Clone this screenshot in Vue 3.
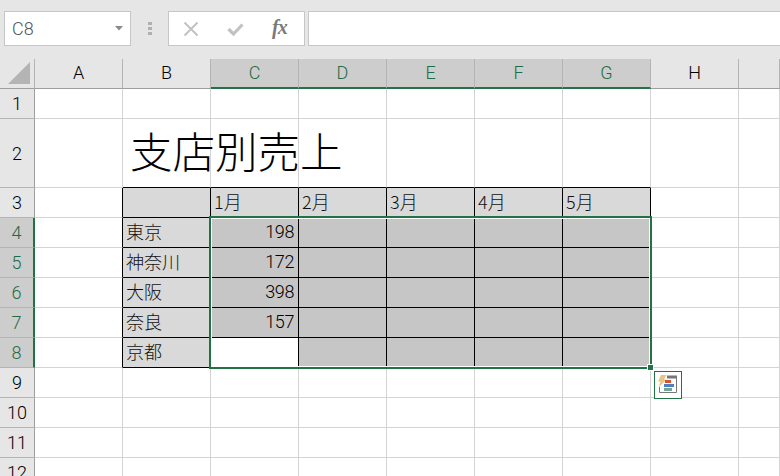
<script setup>
const colNames = ['A', 'B', 'C', 'D', 'E', 'F', 'G', 'H', '']
const rowNums = [1, 2, 3, 4, 5, 6, 7, 8, 9, 10, 11, 12]
const data = {
  B2: '支店別売上',
  C3: '1月', D3: '2月', E3: '3月', F3: '4月', G3: '5月',
  B4: '東京', B5: '神奈川', B6: '大阪', B7: '奈良', B8: '京都',
  C4: '198', C5: '172', C6: '398', C7: '157'
}
const inTable = (c, r) => c >= 1 && c <= 6 && r >= 3 && r <= 8
const cells = []
rowNums.forEach((r) => {
  colNames.forEach((name, c) => {
    const key = name + r
    const cls = []
    const isSel = c >= 2 && c <= 6 && r >= 4 && r <= 8
    if (inTable(c, r)) cls.push(isSel ? (key === 'C8' ? 'active' : 'sel') : 'tbl')
    if (inTable(c, r) || inTable(c + 1, r)) cls.push('br')
    if (inTable(c, r) || inTable(c, r + 1)) cls.push('bb')
    if (r === 2 && c === 1) cls.push('title')
    if (c === 2 && r >= 4) cls.push('num')
    cells.push({ key, text: data[key] || '', cls })
  })
})
</script>

<template>
  <div class="app">
    <div class="fbar">
      <div class="namebox">
        <span class="nametext">C8</span>
        <svg class="caret" width="8" height="5" viewBox="0 0 8 5"><path d="M0 0h8L4 4.500z" fill="#8a8a8a" /></svg>
      </div>
      <div class="grip"><i></i><i></i><i></i></div>
      <div class="btns">
        <svg width="16" height="16" viewBox="0 0 16 16"><path d="M1.500 1.500l13 13M14.500 1.500l-13 13" stroke="#c2c2c2" stroke-width="2" fill="none" /></svg>
        <svg width="18" height="16" viewBox="0 0 18 16"><path d="M1.500 8l5 5 9-9.500" stroke="#c2c2c2" stroke-width="3.200" fill="none" /></svg>
        <span class="fx">fx</span>
      </div>
      <div class="finput"></div>
    </div>

    <div class="sheet">
      <div class="corner"><svg width="23" height="23" viewBox="0 0 23 23"><path d="M22 0v22H0z" fill="#b4b4b4" /></svg></div>
      <div v-for="(n, i) in colNames" :key="'c' + i" class="chead" :class="{ on: i >= 2 && i <= 6 }">{{ n }}</div>
      <template v-for="(r, ri) in rowNums" :key="'r' + r">
        <div class="rhead" :class="{ on: r >= 4 && r <= 8 }">{{ r }}</div>
        <div v-for="cell in cells.slice(ri * 9, ri * 9 + 9)" :key="cell.key" class="cell" :class="cell.cls">{{ cell.text }}</div>
      </template>

      <div class="selection"><span class="handle"></span></div>
      <div class="qa">
        <svg width="26" height="26" viewBox="0 0 26 26">
          <path d="M4.500 15v5.500H21.500V4" fill="none" stroke="#777" stroke-width="1" />
          <path d="M12 3.500h10v3H12z" fill="#777" />
          <path d="M6 3h5.500L9 7.500h2.500L3.500 15.500l2-6H3z" fill="#e9c583" />
          <path d="M10 8h6v3h-6z" fill="#d9532c" />
          <path d="M9 12h10v3H9z" fill="#4e81bd" />
          <path d="M9 16h8v3H9z" fill="#6fa898" />
        </svg>
      </div>
    </div>
  </div>
</template>

<style scoped>
.app {
  width: 780px;
  height: 476px;
  overflow: hidden;
  background: #fff;
  font-family: "Noto Sans CJK JP", "Noto Sans", sans-serif;
  font-weight: 300;
  color: #000;
}
.fbar {
  height: 59px;
  box-sizing: border-box;
  padding: 11px 0 13px 4px;
  background: #e6e6e6;
  display: flex;
}
.namebox {
  width: 127px;
  box-sizing: border-box;
  background: #fff;
  border: 1px solid #c6c6c6;
  display: flex;
  align-items: center;
  justify-content: space-between;
  padding: 0 7px 0 7px;
}
.nametext {
  font-size: 18px;
  color: #555;
  font-family: Roboto, sans-serif;
  font-weight: 300;
}
.grip {
  width: 37px;
  display: flex;
  flex-direction: column;
  align-items: center;
  justify-content: center;
  gap: 2px;
  margin-top: -1px;
}
.grip i {
  width: 4px;
  height: 3px;
  background: #b0b0b0;
}
.btns {
  width: 137px;
  box-sizing: border-box;
  background: #fff;
  border: 1px solid #c6c6c6;
  display: flex;
  align-items: center;
  padding: 0 0 0 14px;
  gap: 28px;
}
.fx {
  font-family: "Liberation Serif", serif;
  font-style: italic;
  font-weight: 700;
  font-size: 20px;
  color: #7a7a7a;
  letter-spacing: -1px;
  margin-top: -3px;
  margin-left: -1px;
}
.finput {
  flex: 1;
  margin-left: 3px;
  background: #fff;
  border: 1px solid #c6c6c6;
  border-right: none;
}
.sheet {
  position: relative;
  display: grid;
  grid-template-columns: 35px repeat(8, 88px) 41px;
  grid-template-rows: 30px 30px 69px repeat(10, 30px);
}
.corner {
  background: #e6e6e6;
  border-right: 1px solid #b4b4b4;
  border-bottom: 1px solid #9e9e9e;
  box-sizing: border-box;
  display: flex;
  align-items: flex-end;
  justify-content: flex-end;
  padding: 0 3px 3px 0;
}
.chead {
  background: #e6e6e6;
  border-right: 1px solid #b4b4b4;
  border-bottom: 1px solid #9e9e9e;
  box-sizing: border-box;
  text-align: center;
  font-size: 18px;
  line-height: 28px;
  font-family: Roboto, sans-serif;
  font-weight: 300;
}
.chead.on {
  background: #cdcdcd;
  color: #1f6b45;
  border-bottom: 2px solid #217346;
}
.rhead {
  background: #e6e6e6;
  border-right: 1px solid #9e9e9e;
  border-bottom: 1px solid #b4b4b4;
  box-sizing: border-box;
  display: flex;
  align-items: center;
  justify-content: center;
  font-size: 18px;
  font-family: Roboto, sans-serif;
  font-weight: 300;
}
.rhead.on {
  background: #cdcdcd;
  color: #1f6b45;
  border-right: 2px solid #217346;
}
.cell {
  box-sizing: border-box;
  border-right: 1px solid #d4d4d4;
  border-bottom: 1px solid #d4d4d4;
  padding: 0 4px 0 3px;
  font-size: 18px;
  line-height: 27px;
  white-space: nowrap;
  color: #111;
}
.cell.br { border-right-color: #000; }
.cell.bb { border-bottom-color: #000; }
.cell.tbl { background: #d9d9d9; }
.cell.sel { background: #c6c6c6; }
.cell.active { background: #fff; }
.cell.num {
  text-align: right;
  font-family: Roboto, sans-serif;
  letter-spacing: -0.4px;
  color: #000;
}
.cell.title {
  font-size: 42.500px;
  line-height: 62px;
  padding-left: 7px;
  color: #000;
  overflow: visible;
}
.selection {
  position: absolute;
  left: 209px;
  top: 157px;
  width: 443px;
  height: 153px;
  box-sizing: border-box;
  border: 2px solid #217346;
  box-shadow: inset 0 0 0 1px #fff;
}
.handle {
  position: absolute;
  right: -4px;
  bottom: -4px;
  width: 5px;
  height: 5px;
  background: #217346;
  border: 1px solid #fff;
  box-sizing: content-box;
}
.qa {
  position: absolute;
  left: 654px;
  top: 312px;
  width: 28px;
  height: 28px;
  box-sizing: border-box;
  border: 1px solid #217346;
  background: #fff;
  display: flex;
  align-items: center;
  justify-content: center;
}
</style>
